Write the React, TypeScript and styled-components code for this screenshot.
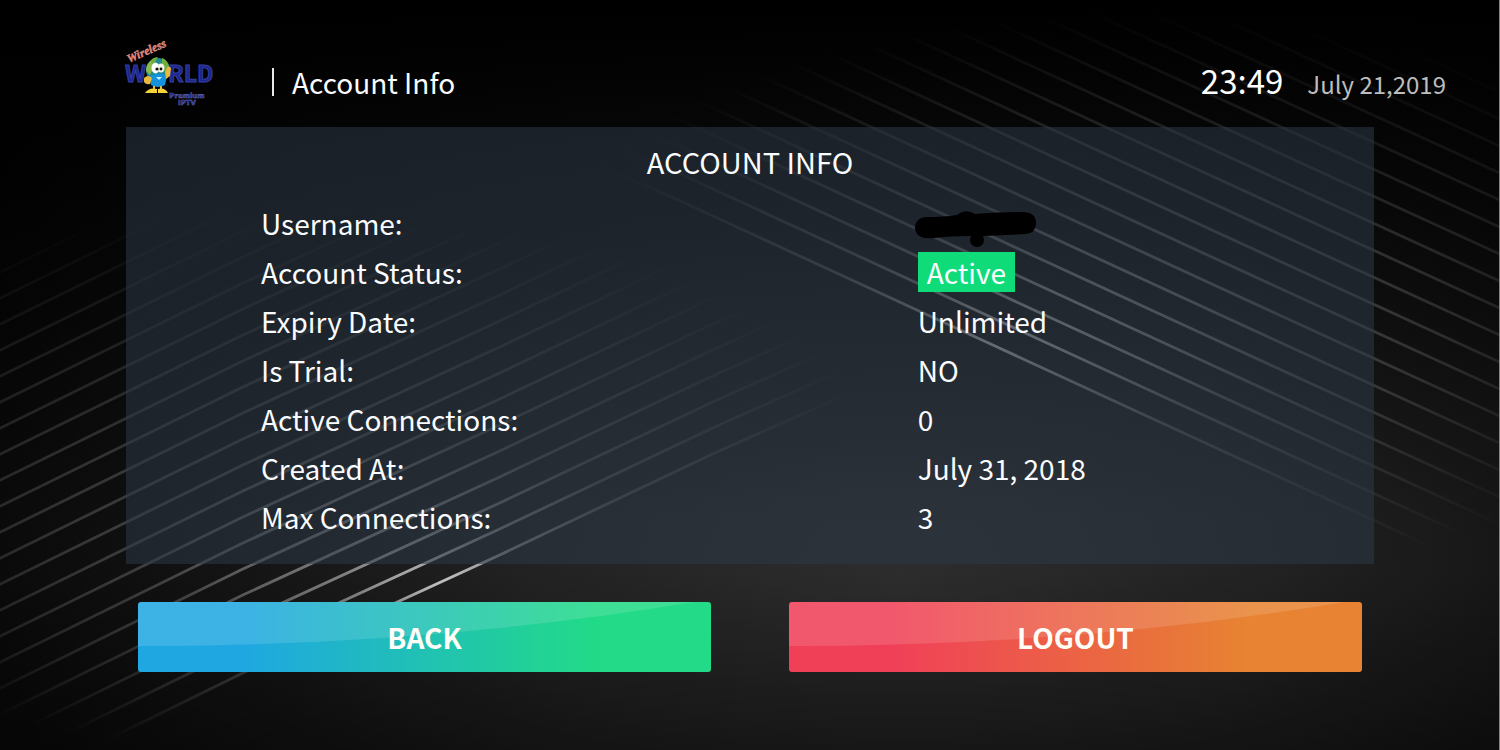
import React from 'react';
import styled, { createGlobalStyle } from 'styled-components';

const GlobalStyle = createGlobalStyle`
  *, *::before, *::after { box-sizing: border-box; }
  body {
    margin: 0;
    background: #000;
    color: #fafcff;
    font-family: "Noto Sans CJK SC", "Noto Sans", sans-serif;
    font-size: 28px;
    line-height: 40px;
  }
`;

const Screen = styled.div`
  position: relative;
  isolation: isolate;
  min-height: 100vh;
  overflow: hidden;
  border-right: 1px solid #858585;
  background:
    linear-gradient(to bottom, rgba(0, 0, 0, 0) 76%, rgba(0, 0, 0, 0.42) 100%),
    linear-gradient(to bottom, #000 0%, rgba(0, 0, 0, 0.75) 15%, rgba(0, 0, 0, 0) 70%),
    radial-gradient(ellipse 70% 110% at 60% 78%, #2d2d2d 0%, #222 35%, #131313 65%, #040404 100%);
`;

const Backdrop = styled.svg`
  position: absolute;
  inset: 0;
  z-index: -1;
  width: 100%;
  height: 100%;
`;

const Header = styled.header`
  display: flex;
  align-items: center;
  height: 127px;
  padding: 38px 53px 2px 124px;
`;

const LogoMark = styled.svg`
  flex: none;
  align-self: flex-start;
  width: 90px;
  height: 70px;
  overflow: visible;
`;

const PageTitle = styled.h1`
  display: flex;
  align-items: center;
  gap: 18px;
  margin: 0 auto 0 58px;
  font-size: 28px;
  font-weight: 400;

  &::before {
    content: "";
    width: 2px;
    height: 28px;
    background: #e8e8e8;
  }
`;

const Clock = styled.div`
  display: flex;
  align-items: baseline;
  gap: 24px;
`;

const Time = styled.time`
  font-size: 33px;
  color: #fff;
`;

const Day = styled.time`
  font-size: 24px;
  color: #bdbdbd;
`;

const Main = styled.main`
  padding: 0 125px 0 126px;
`;

const Panel = styled.section`
  padding: 14px 0 23px;
  background: rgba(43, 56, 70, 0.55);
`;

const PanelTitle = styled.h2`
  margin: 0 0 17px;
  font-size: 29px;
  font-weight: 400;
  text-align: center;
`;

const Details = styled.dl`
  margin: 0;
  padding-left: 135px;
`;

const Detail = styled.div`
  display: grid;
  grid-template-columns: 59% 1fr;
  align-items: center;
  height: 49px;
`;

const Label = styled.dt``;

const Value = styled.dd`
  display: flex;
  align-items: center;
  margin: 0;
`;

const Badge = styled.span`
  padding: 0 9px;
  background: #0fdc78;
`;

const Scribble = styled.svg`
  width: 124px;
  height: 36px;
  margin: 8px 0 0 -4px;
  overflow: visible;
`;

const Actions = styled.div`
  display: grid;
  grid-template-columns: 1fr 1fr;
  gap: 78px;
  padding: 38px 12px;
`;

const ActionButton = styled.button<{ $from: string; $to: string }>`
  position: relative;
  height: 70px;
  padding: 0;
  overflow: hidden;
  border: 0;
  border-radius: 3px;
  background: linear-gradient(to right, ${(p) => p.$from} 18%, ${(p) => p.$to} 80%);
  color: #fffdf8;
  font: inherit;
  font-weight: 700;
  cursor: pointer;
`;

const Gloss = styled.svg`
  position: absolute;
  inset: 0;
  width: 100%;
  height: 100%;
`;

const Caption = styled.span`
  position: relative;
`;

const leftLines = Array.from({ length: 22 }, (_, i) => i * 26);
const rightLines = Array.from({ length: 22 }, (_, i) => i * 27);

function Lines() {
  return (
    <Backdrop viewBox="0 0 1500 750" preserveAspectRatio="none" aria-hidden="true">
      <defs>
        <radialGradient id="glowLeft" gradientUnits="userSpaceOnUse" cx="0" cy="0" r="1" fx="0.26" fy="0.39"
          gradientTransform="translate(300 480) scale(600 275)">
          <stop offset="0" stopColor="#fff" stopOpacity="0.75" />
          <stop offset="0.15" stopColor="#fff" stopOpacity="0.44" />
          <stop offset="0.4" stopColor="#fff" stopOpacity="0.2" />
          <stop offset="0.7" stopColor="#fff" stopOpacity="0.1" />
          <stop offset="0.85" stopColor="#fff" stopOpacity="0.05" />
          <stop offset="1" stopColor="#fff" stopOpacity="0" />
        </radialGradient>
        <radialGradient id="glowRight" gradientUnits="userSpaceOnUse" cx="0" cy="0" r="1" fx="-0.22" fy="0.14"
          gradientTransform="translate(1130 300) scale(600 290)">
          <stop offset="0" stopColor="#fff" stopOpacity="0.65" />
          <stop offset="0.15" stopColor="#fff" stopOpacity="0.46" />
          <stop offset="0.4" stopColor="#fff" stopOpacity="0.22" />
          <stop offset="0.7" stopColor="#fff" stopOpacity="0.09" />
          <stop offset="0.85" stopColor="#fff" stopOpacity="0.04" />
          <stop offset="1" stopColor="#fff" stopOpacity="0" />
        </radialGradient>
      </defs>
      <g fill="none" stroke="url(#glowLeft)" strokeWidth="2.8">
        {leftLines.map((d) => (
          <path key={d} d={`M-20 ${802 - d}L243 ${673 - d}L500 ${555 - d}L713 ${454 - d}L960 ${344 - d}`} />
        ))}
      </g>
      <g fill="none" stroke="url(#glowRight)" strokeWidth="2.8">
        {rightLines.map((d) => (
          <path key={d} d={`M480 ${112 - d}L683 ${202 - d}L1000 ${348 - d}L1217 ${448 - d}L1520 ${587 - d}`} />
        ))}
      </g>
    </Backdrop>
  );
}

function Logo() {
  return (
    <LogoMark viewBox="0 0 90 70" role="img" aria-label="Wireless World Premium IPTV">
      <text x="5" y="25" transform="rotate(-24 5 25)" fontFamily="Liberation Serif, serif" fontWeight="700"
        fontStyle="italic" fontSize="12" fill="#e0786f" stroke="#f0b4aa" strokeWidth="0.3">Wireless</text>
      <g fontFamily="Noto Sans CJK SC, sans-serif" fontWeight="700" fontSize="23"
        fill="#1c2590" stroke="#3340a0" strokeWidth="1">
        <text x="1" y="44">W</text>
        <text x="44" y="44">RLD</text>
      </g>
      <g fontFamily="DejaVu Sans, sans-serif" fontWeight="700" fontSize="7" fill="#20267c" stroke="#7078c8"
        strokeWidth="0.4" textAnchor="middle">
        <text x="63" y="60">Premium</text>
        <text x="63" y="67">IPTV</text>
      </g>
      <circle cx="34" cy="32" r="12" fill="#1f8a94" />
      <path d="M25 25Q28 19 34 19L31 24L26 30ZM38 20Q44 22 45 29L41 34L38 27Z" fill="#6fae3c" />
      <path d="M22 33Q22 26 27 23L29 30L26 37ZM42 36L45 30L45 37Z" fill="#8cba4a" />
      <path d="M25 39Q34 33 43 38L41 47Q34 51 27 47Z" fill="#1592dc" />
      <ellipse cx="31.5" cy="30" rx="4" ry="5.4" fill="#fff" />
      <ellipse cx="37" cy="30" rx="3.4" ry="4.6" fill="#f4f4e4" />
      <circle cx="33" cy="31" r="1.6" fill="#111" />
      <circle cx="37" cy="31" r="1.4" fill="#111" />
      <path d="M32 39L38 39L35 42Z" fill="#c8f0fa" />
      <path d="M20 40Q24 36 28 40L26 46Q22 47 20 44ZM41 34L44 28L47 30L46 38L42 41Z" fill="#e8b93a" />
      <path d="M30 48V51M37 48V51" stroke="#e8b93a" strokeWidth="2" />
      <path d="M21 55Q25 49 33 51V55ZM34 55V51Q41 49 44 55Z" fill="#f5d13c" />
    </LogoMark>
  );
}

function Redaction() {
  return (
    <Scribble viewBox="0 0 124 36" role="img" aria-label="Hidden">
      <path d="M12 8Q30 8 43 6Q52 -1 61 5Q85 3 110 3Q122 4 122 14Q122 24 112 25Q92 26 69 27L57 27Q35 27 20 29Q2 31 1 19Q1 9 12 8Z" fill="#000" />
      <circle cx="63" cy="31" r="7" fill="#000" />
    </Scribble>
  );
}

const details: [string, React.ReactNode][] = [
  ['Username:', <Redaction />],
  ['Account Status:', <Badge>Active</Badge>],
  ['Expiry Date:', 'Unlimited'],
  ['Is Trial:', 'NO'],
  ['Active Connections:', '0'],
  ['Created At:', 'July 31, 2018'],
  ['Max Connections:', '3'],
];

function Action({ from, to, children }: { from: string; to: string; children: React.ReactNode }) {
  return (
    <ActionButton type="button" $from={from} $to={to}>
      <Gloss viewBox="0 0 572 70" preserveAspectRatio="none" aria-hidden="true">
        <path d="M0 0V44Q290 44 555 0Z" fill="#fff" fillOpacity="0.13" />
      </Gloss>
      <Caption>{children}</Caption>
    </ActionButton>
  );
}

export default function App() {
  return (
    <>
      <GlobalStyle />
      <Screen>
        <Lines />
        <Header>
          <Logo />
          <PageTitle>Account Info</PageTitle>
          <Clock>
            <Time dateTime="23:49">23:49</Time>
            <Day dateTime="2019-07-21">July 21,2019</Day>
          </Clock>
        </Header>
        <Main>
          <Panel>
            <PanelTitle>ACCOUNT INFO</PanelTitle>
            <Details>
              {details.map(([label, value]) => (
                <Detail key={label}>
                  <Label>{label}</Label>
                  <Value>{value}</Value>
                </Detail>
              ))}
            </Details>
          </Panel>
          <Actions>
            <Action from="#1fa7e2" to="#22da87">BACK</Action>
            <Action from="#f04058" to="#e78332">LOGOUT</Action>
          </Actions>
        </Main>
      </Screen>
    </>
  );
}
